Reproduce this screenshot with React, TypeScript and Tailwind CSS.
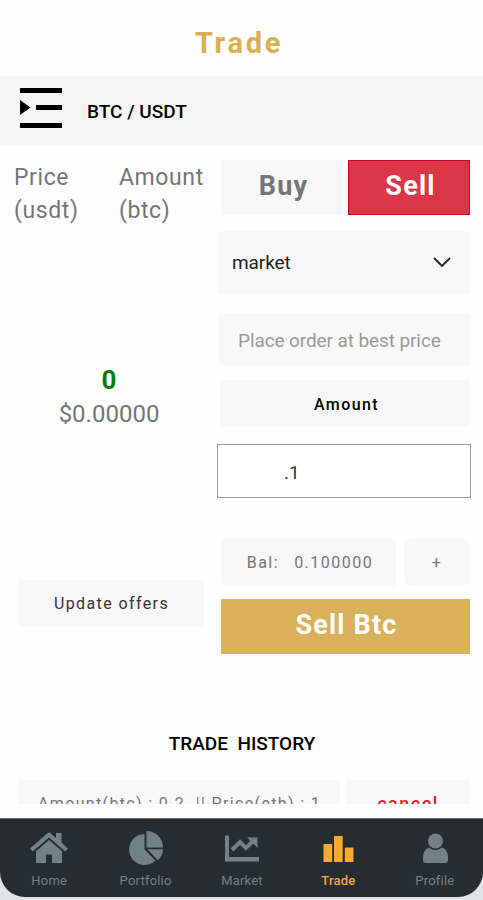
import { useState } from 'react';

const tabs = ['Home', 'Portfolio', 'Market', 'Trade', 'Profile'];

function TabIcon({ name }: { name: string }) {
  return (
    <svg viewBox="0 0 40 36" className="w-10 h-9" fill="currentColor">
      {name === 'Home' && (
        <>
          <path d="M1 18.500 18.500 3.200q1.500-1.200 3 0L27 8V3h5.500v9.700L39 18.500l-2.700 3L20 7.500 3.700 21.500z" />
          <path d="M7 21.200 20 10l13 11.200V33h-10v-8.500h-6V33H7z" />
        </>
      )}
      {name === 'Portfolio' && (
        <>
          <path d="M18.500 4v15.500l11 11A15.500 15.500 0 1 1 18.500 4z" />
          <path d="M20.500 1a16.500 16.500 0 0 1 16.500 16.500H20.500z" />
          <path d="M21.500 19.300H37q-.2 6.500-5.200 11z" />
        </>
      )}
      {name === 'Market' && (
        <>
          <path d="M3 5.500h4V27h30v4.500H3z" />
          <path d="m10 20 8-8 6 6 7-7" fill="none" stroke="currentColor" strokeWidth="4" />
          <path d="M25 7.500h10.500V18z" />
        </>
      )}
      {name === 'Trade' && (
        <>
          <path d="M5.500 14h8.700v18H5.500z" />
          <path d="M16 6h8.700v26H16z" />
          <path d="M26.800 17.500h8.700V32h-8.700z" />
        </>
      )}
      {name === 'Profile' && (
        <>
          <circle cx="20.500" cy="11" r="7.500" />
          <path d="M14 17.500q6.500 5 13 0C31 19 33 23 33 27v3q0 3-3 3H11q-3 0-3-3v-3c0-4 2-8 6-9.500z" />
        </>
      )}
    </svg>
  );
}

function IndentIcon() {
  return (
    <svg viewBox="0 0 42 40" className="w-[42px] h-10" fill="currentColor">
      <path d="M0 0h42v5H0zM0 12 10.500 19.500 0 27zM16 17h26v5H16zM0 35h42v5H0z" />
    </svg>
  );
}

export default function App() {
  const [side, setSide] = useState('Sell');
  const [amount, setAmount] = useState('.1');

  return (
    <div className="w-full max-w-[483px] h-[900px] mx-auto flex flex-col overflow-hidden bg-[#fefefe] font-['Roboto',sans-serif] text-black">
      <header className="h-[76px] shrink-0 flex items-center justify-center pt-[10px] pr-[5px]">
        <h1 className="text-[29px] leading-none font-bold tracking-[2.7px] text-[#d8b04f]">Trade</h1>
      </header>

      {/* Trading pair */}
      <div className="h-[70px] shrink-0 flex items-center bg-[#f6f6f6] pl-5 pb-[6px] gap-[25px]">
        <button aria-label="Pairs"><IndentIcon /></button>
        <span className="pt-[6px] text-[19px] leading-none font-medium">BTC / USDT</span>
      </div>

      <main className="h-[658px] shrink-0 overflow-hidden">
        <div className="flex h-[564px]">
          {/* Order book */}
          <section className="w-[217px] pt-[15px] text-[#757575]">
            <div className="flex h-[66px] pl-[14px] text-[23px] leading-[33px] tracking-[0.6px]">
              <span className="w-[105px]">Price<br />(usdt)</span>
              <span>Amount<br />(btc)</span>
            </div>
            <div className="mt-[136px] pl-px flex flex-col items-center text-[24px] leading-[34px]">
              <span className="text-[26px] font-bold text-[#087b08]">0</span>
              <span>$0.00000</span>
            </div>
            <button className="mt-[149px] ml-[18px] w-[186px] h-[47px] pl-px pt-px rounded bg-[#f8f8f8] text-[16px] tracking-[1.4px] text-[#333]">
              Update offers
            </button>
          </section>

          {/* Order form */}
          <section className="w-[254px] pt-[14px] flex flex-col items-end">
            <div className="flex gap-[5px] pr-px text-[27px] font-bold tracking-[1.2px]">
              {['Buy', 'Sell'].map((s) => (
                <button
                  key={s}
                  onClick={() => setSide(s)}
                  className={`w-[122px] h-[55px] pb-[3px] pl-[3px] ${
                    side === s ? 'bg-[#dc3545] border border-[#d00030] text-white' : 'bg-[#f8f8f8] text-[#757575]'
                  }`}
                >
                  {s}
                </button>
              ))}
            </div>
            <button className="mt-4 mr-px w-[252px] h-[63px] rounded bg-[#f8f8f8] flex items-center justify-between pl-[14px] pr-[19px] text-[19px] tracking-[-0.1px] text-[#222]">
              <span className="pt-[2px]">market</span>
              <svg viewBox="0 0 18 11" className="w-[18px] h-[11px]" fill="none" stroke="currentColor" strokeWidth="1.800">
                <path d="m1 1 8 8 8-8" />
              </svg>
            </button>
            <div className="mt-[19px] mr-px w-[251px] h-[53px] rounded bg-[#f8f8f8] flex items-center pl-[19px] pt-[4px] text-[19px] tracking-[-0.1px] text-[#999]">
              Place order at best price
            </div>
            <div className="mt-[14px] mr-px w-[250px] h-[47px] rounded bg-[#f8f8f8] flex items-center justify-center pl-[3px] pt-[2px] text-[16px] font-medium tracking-[1.4px]">
              Amount
            </div>
            <input
              value={amount}
              onChange={(e) => setAmount(e.target.value)}
              className="mt-[17px] w-[254px] h-[54px] border-[1.500px] border-[#999] bg-white pl-[66px] pt-[2px] text-[19px] text-[#333] outline-none"
            />
            <div className="mt-[41px] mr-px flex gap-2 text-[16px] tracking-[1.5px] text-[#757575]">
              <div className="w-[175px] h-[47px] pl-[3px] pt-px rounded bg-[#f8f8f8] flex items-center justify-center gap-[15px]">
                <span>Bal:</span>
                <span>0.100000</span>
              </div>
              <button className="w-[66px] h-[47px] rounded-lg bg-[#f8f8f8]">+</button>
            </div>
            <button className="mt-[13px] mr-px w-[249px] h-[55px] pb-[3px] pl-[2px] bg-[#d9b15b] text-[27px] font-bold tracking-[1.2px] text-white">
              Sell Btc
            </button>
          </section>
        </div>

        {/* Trade history */}
        <h2 className="h-[70px] pt-[23px] pl-px text-center text-[19px] leading-[22px] font-medium whitespace-pre">TRADE  HISTORY</h2>
        <div className="flex gap-[6px] pl-[18px] text-[16px] tracking-[1.350px]">
          <div className="w-[322px] h-[47px] rounded bg-[#f8f8f8] flex items-center pl-5 whitespace-pre text-[#757575]">
            Amount(btc) : 0.2  || Price(eth) : 1
          </div>
          <button className="w-[124px] h-[47px] rounded bg-[#f8f8f8] text-[18px] font-medium tracking-[1.5px] text-[#e11b22]">cancel</button>
        </div>
      </main>

      {/* Bottom tab bar */}
      <footer className="mt-[14px] h-[82px] bg-[#e1e4e5]">
        <nav className="h-[79px] flex rounded-b-[25px] border-t border-[#59656a] bg-[#252d33] pl-px">
          {tabs.map((tab) => (
            <button
              key={tab}
              className={`flex-1 flex flex-col items-center pt-[11px] text-[13px] leading-[15px] tracking-[0.2px] ${
                tab === 'Trade' ? 'text-[#f5ab2d] font-medium' : 'text-[#728087]'
              }`}
            >
              <TabIcon name={tab} />
              <span className="mt-[7px]">{tab}</span>
            </button>
          ))}
        </nav>
      </footer>
    </div>
  );
}
